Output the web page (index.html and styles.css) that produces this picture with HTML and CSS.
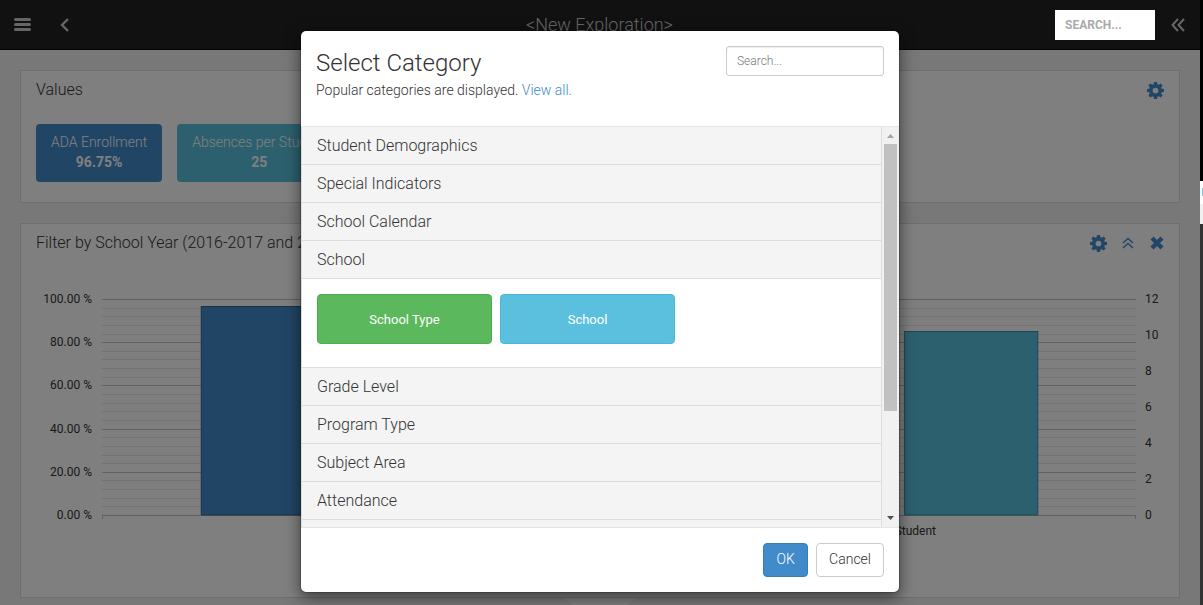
FILE: index.html
```html
<!DOCTYPE html>
<html lang="en">
<head>
<meta charset="utf-8">
<meta name="viewport" content="width=device-width, initial-scale=1">
<title>New Exploration</title>
<link rel="stylesheet" href="styles.css">
</head>
<body class="page">
<svg class="sprite" aria-hidden="true">
  <symbol id="gear" viewBox="0 0 16 16">
    <path fill-rule="evenodd" d="M6.6 0h2.8l.4 2.2 1.2.5 1.9-1.3 1.8 1.9-1.3 1.8.5 1.2 2.1.4v2.6l-2.1.4-.5 1.2 1.3 1.9-1.9 1.9-1.8-1.3-1.2.5L9.400 16H6.600l-.4-2.100-1.200-.5-1.800 1.300-1.900-1.900 1.300-1.900-.5-1.200L0 9.300V6.700l2.100-.4.5-1.200-1.300-1.800 1.900-1.900L5 2.700l1.200-.5zM8 5.300a2.700 2.700 0 1 0 0 5.400 2.700 2.700 0 0 0 0-5.400z"/>
  </symbol>
</svg>
<div class="app">
  <header class="topbar">
    <div class="topbar-side">
      <button class="icon-btn" type="button" aria-label="Menu">
        <svg width="17" height="14" viewBox="0 0 17 14"><path d="M1.500 1.500h14M1.500 6.500h14M1.500 11.500h14" stroke="currentColor" stroke-width="3" stroke-linecap="round"/></svg>
      </button>
      <button class="icon-btn" type="button" aria-label="Back">
        <svg width="10" height="14" viewBox="0 0 10 14"><path d="M8 1L2 7l6 6" fill="none" stroke="currentColor" stroke-width="2.400"/></svg>
      </button>
    </div>
    <h1 class="topbar-title">&lt;New Exploration&gt;</h1>
    <div class="topbar-side topbar-right">
      <input class="top-search" type="search" placeholder="SEARCH..." aria-label="Search">
      <button class="icon-btn" type="button" aria-label="Collapse">
        <svg width="14" height="14" viewBox="0 0 14 14"><path d="M7 1L1.500 7 7 13M13 1L7.500 7l5.500 6" fill="none" stroke="currentColor" stroke-width="2"/></svg>
      </button>
    </div>
  </header>

  <main class="content">
    <section class="panel">
      <div class="panel-head">
        <h2 class="panel-title">Values</h2>
        <div class="panel-tools">
          <button class="tool" type="button" aria-label="Settings"><svg width="17" height="17"><use href="#gear"/></svg></button>
        </div>
      </div>
      <div class="tiles">
        <div class="tile tile-blue"><span>ADA Enrollment</span><strong>96.75%</strong></div>
        <div class="tile tile-teal"><span>Absences per Student</span><strong>25</strong></div>
      </div>
    </section>

    <section class="panel panel-chart">
      <div class="panel-head">
        <h2 class="panel-title">Filter by School Year (2016-2017 and 2017-2018)</h2>
        <div class="panel-tools">
          <button class="tool" type="button" aria-label="Settings"><svg width="17" height="17"><use href="#gear"/></svg></button>
          <button class="tool" type="button" aria-label="Collapse"><svg width="13" height="12" viewBox="0 0 13 12"><path d="M1 6l5-4.500L11 6M1 11l5-4.500L11 11" fill="none" stroke="currentColor" stroke-width="1.500"/></svg></button>
          <button class="tool" type="button" aria-label="Close"><svg width="14" height="14" viewBox="0 0 14 14"><path d="M2 2l10 10M12 2L2 12" stroke="currentColor" stroke-width="4.400"/></svg></button>
        </div>
      </div>
      <div class="chart">
        <div class="axis axis-left"><span>100.00 %</span><span>80.00 %</span><span>60.00 %</span><span>40.00 %</span><span>20.00 %</span><span>0.00 %</span></div>
        <div class="plot">
          <svg class="plot-svg" role="img" aria-label="Bar chart">
            <g class="minor">
              <rect y="9"/><rect y="17"/><rect y="26"/><rect y="35"/>
              <rect y="52"/><rect y="60"/><rect y="69"/><rect y="78"/>
              <rect y="95"/><rect y="104"/><rect y="112"/><rect y="121"/>
              <rect y="138"/><rect y="147"/><rect y="156"/><rect y="164"/>
              <rect y="181"/><rect y="190"/><rect y="199"/><rect y="207"/>
            </g>
            <g class="major">
              <rect y="0"/><rect y="43"/><rect y="86"/><rect y="130"/><rect y="173"/><rect y="216"/>
            </g>
            <rect class="bar-blue" x="9.600%" y="7.500" width="12.900%" height="208.500"/>
            <rect class="bar-teal" x="77.600%" y="32.500" width="12.900%" height="183.500"/>
            <rect class="tick" x="0" y="216"/>
            <svg x="100%" overflow="visible"><rect class="tick" x="-1" y="216"/></svg>
          </svg>
          <div class="categories"><span>ADA Enrollment</span><span>Absences per Student</span></div>
        </div>
        <div class="axis axis-right"><span>12</span><span>10</span><span>8</span><span>6</span><span>4</span><span>2</span><span>0</span></div>
      </div>
    </section>
    <div class="drawer-handle"></div>
  </main>

  <div class="backdrop">
    <div class="modal" role="dialog" aria-labelledby="modal-title">
      <div class="modal-head">
        <div>
          <h2 class="modal-title" id="modal-title">Select Category</h2>
          <p class="modal-note">Popular categories are displayed. <a class="link" href="#">View all.</a></p>
        </div>
        <input class="modal-search" type="text" placeholder="Search..." aria-label="Search categories">
      </div>
      <div class="modal-body">
        <div class="categories-list">
          <button class="row" type="button">Student Demographics</button>
          <button class="row" type="button">Special Indicators</button>
          <button class="row" type="button">School Calendar</button>
          <button class="row" type="button">School</button>
          <div class="row-panel">
            <button class="choice choice-green" type="button">School Type</button>
            <button class="choice choice-teal" type="button">School</button>
          </div>
          <button class="row" type="button">Grade Level</button>
          <button class="row" type="button">Program Type</button>
          <button class="row" type="button">Subject Area</button>
          <button class="row" type="button">Attendance</button>
          <div class="row row-empty"></div>
        </div>
        <div class="scrollbar" aria-hidden="true">
          <svg width="7" height="4" viewBox="0 0 7 4"><path d="M0 4l3.500-4L7 4z" fill="#a3a3a3"/></svg>
          <div class="scroll-track"><div class="scroll-thumb"></div></div>
          <svg width="7" height="4" viewBox="0 0 7 4"><path d="M0 0h7L3.500 4z" fill="#505050"/></svg>
        </div>
      </div>
      <div class="modal-foot">
        <button class="btn btn-primary" type="button">OK</button>
        <button class="btn" type="button">Cancel</button>
      </div>
    </div>
  </div>
</div>
<div class="edge" aria-hidden="true"><div class="edge-top"></div><div class="edge-tab"></div><div class="edge-gap"></div></div>
</body>
</html>
```
FILE: styles.css
```css
* { box-sizing: border-box; }
.page {
  margin: 0;
  display: flex;
  height: 100vh;
  overflow: hidden;
  font-family: Roboto, "Liberation Sans", sans-serif;
  font-size: 14px;
  font-weight: 300;
  line-height: 20px;
  color: #333;
}
button, input { font: inherit; }
button { cursor: pointer; }
h1, h2, p { margin: 0; font-weight: 300; }
.sprite { display: none; }
.app {
  position: relative;
  flex: 1;
  min-width: 0;
  overflow: hidden;
  background: #f0f0f0;
}

.topbar {
  display: flex;
  align-items: center;
  height: 50px;
  padding: 0 15px 0 14px;
  background: #222;
  border-bottom: 1px solid #080808;
  color: #ccc;
}
.topbar-side { flex: 1; display: flex; align-items: center; gap: 29px; }
.topbar-right { justify-content: flex-end; gap: 16px; }
.topbar-title { font-size: 18px; color: #ccc; }
.icon-btn { display: flex; padding: 0; border: 0; background: none; color: #ccc; }
.top-search {
  position: relative;
  z-index: 2;
  width: 100px;
  height: 30px;
  padding: 0 10px;
  border: 0;
  background: #fff;
  font-size: 12px;
  font-weight: 700;
}
.top-search::placeholder { color: #aaa; }

.content { display: flex; flex-direction: column; gap: 20px; padding: 20px 20px 0; }
.panel { padding: 9px 15px 20px; background: #fff; border: 1px solid #ddd; }
.panel-head { display: flex; justify-content: space-between; align-items: center; }
.panel-title { font-size: 16px; line-height: 20px; }
.panel-tools { display: flex; align-items: center; gap: 15px; }
.tool { display: flex; padding: 0; border: 0; background: none; color: #428bca; fill: currentColor; }
.tiles { display: flex; gap: 15px; margin-top: 24px; }
.tile { display: flex; flex-direction: column; align-items: center; padding: 8px 15px 10px; border-radius: 4px; color: #fff; }
.tile strong { font-weight: 700; }
.tile-blue { background: #428bca; }
.tile-teal { background: #5bc0de; }

.panel-chart { padding-bottom: 59px; }
.chart { display: flex; margin-top: 39px; font-size: 12px; line-height: 14px; font-weight: 400; color: #333; }
.axis { display: flex; flex-direction: column; justify-content: space-between; height: 230px; }
.axis-left { width: 56px; text-align: right; }
.axis-right { width: 28px; padding-left: 9px; }
.plot { flex: 1; min-width: 0; margin-left: 10px; padding-top: 7px; }
.plot-svg { display: block; width: 100%; height: 220px; }
.minor rect { width: 100%; height: 1px; fill: #e6e6e6; }
.major rect { width: 100%; height: 1px; fill: #c0c0c0; }
.tick { width: 1px; height: 4px; fill: #c0c0c0; }
.bar-blue { fill: #428bca; stroke: #2d6490; }
.bar-teal { fill: #5bc0de; stroke: #3590a8; }
.categories { display: grid; grid-template-columns: 1fr 1fr; margin-top: 5px; text-align: center; }
.drawer-handle {
  align-self: center;
  width: 72px;
  height: 10px;
  margin-top: -20px;
  background: #fff;
  clip-path: polygon(0 0, 100% 0, 85% 100%, 15% 100%);
}

.backdrop {
  position: absolute;
  inset: 0;
  z-index: 1;
  padding-top: 30px;
  background: rgba(0, 0, 0, .5);
}
.modal {
  width: 600px;
  max-width: 100%;
  margin: 0 auto;
  background: #fff;
  background-clip: padding-box;
  border: 1px solid rgba(0, 0, 0, .2);
  border-radius: 6px;
  box-shadow: 0 5px 15px rgba(0, 0, 0, .5);
}
.modal-head { display: flex; justify-content: space-between; align-items: flex-start; padding: 15px 15px 26px; }
.modal-title { font-size: 24px; line-height: 34px; }
.modal-note { line-height: 20px; }
.link { color: #428bca; text-decoration: none; }
.modal-search {
  width: 158px;
  height: 30px;
  padding: 0 10px;
  border: 1px solid #ccc;
  border-radius: 3px;
  font-size: 12px;
  box-shadow: inset 0 1px 1px rgba(0, 0, 0, .075);
}
.modal-search::placeholder { color: #777; }
.modal-body { display: flex; height: 402px; border-top: 1px solid #e5e5e5; border-bottom: 1px solid #e5e5e5; }
.categories-list { flex: 1; overflow: hidden; border: solid #ddd; border-width: 0 1px; }
.row {
  display: block;
  width: 100%;
  height: 38px;
  padding: 0 15px;
  border: 0;
  border-bottom: 1px solid #ddd;
  background: #f4f4f4;
  color: #333;
  font-size: 16px;
  font-weight: 300;
  text-align: left;
}
.row-panel { display: flex; gap: 8px; padding: 15px 15px 23px; border-bottom: 1px solid #ddd; }
.choice { width: 175px; height: 50px; padding: 2px 6px 0; border: 1px solid; border-radius: 4px; color: #fff; font-size: 13px; font-weight: 400; }
.choice-green { background: #5cb85c; border-color: #4cae4c; }
.choice-teal { background: #5bc0de; border-color: #46b8da; }
.scrollbar {
  display: flex;
  flex-direction: column;
  align-items: center;
  gap: 6px;
  width: 17px;
  padding: 7px 2px;
  background: #f1f1f1;
}
.scroll-track { flex: 1; width: 100%; }
.scroll-thumb { height: 73%; background: #c1c1c1; }
.modal-foot { display: flex; justify-content: flex-end; gap: 8px; padding: 15px; }
.btn { min-width: 45px; height: 34px; padding: 0 12px 2px; border: 1px solid #ccc; border-radius: 4px; background: #fff; color: #333; font-weight: 300; }
.btn-primary { background: #428bca; border-color: #357ebd; color: #fff; }

.edge { display: flex; flex-direction: column; width: 3px; background: #333; }
.edge-top { height: 181px; background: #000; }
.edge-tab { height: 23px; background: linear-gradient(#8cc8ec, #8cc8ec) 2px 7px / 1px 8px no-repeat #fff; }
.edge-gap { height: 20px; background: #f0f0f0; }
```
